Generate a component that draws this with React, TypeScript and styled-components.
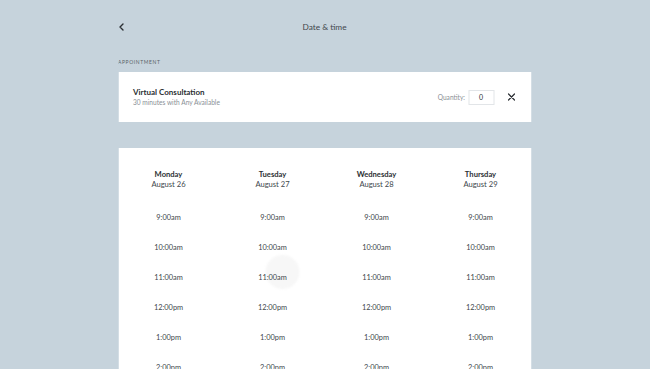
import React from 'react';
import styled, { createGlobalStyle } from 'styled-components';

const GlobalStyle = createGlobalStyle`
  html, body {
    margin: 0;
    padding: 0;
    background: #c6d3dc;
  }
  body {
    font-family: Lato, "Open Sans", sans-serif;
    color: #2b2f33;
    -webkit-font-smoothing: antialiased;
  }
`;

const Page = styled.div`
  width: 413px;
  margin: 0 auto;
  padding-top: 18px;
  height: 369px;
  overflow: hidden;
  box-sizing: border-box;
  transform: translateX(-0.5px);
`;

const Header = styled.div`
  position: relative;
  display: flex;
  align-items: center;
  justify-content: center;
  height: 18px;
`;

const BackButton = styled.button`
  position: absolute;
  left: -3px;
  top: 3px;
  border: 0;
  background: none;
  padding: 0;
  width: 12px;
  height: 12px;
  display: flex;
  align-items: center;
  justify-content: center;
  color: #2b2f33;
`;

const Title = styled.h1`
  margin: 0;
  font-size: 8.3px;
  font-weight: 400;
  color: #41474c;
`;

const SectionLabel = styled.div`
  margin-top: 23px;
  font-size: 5px;
  letter-spacing: 0.6px;
  text-transform: uppercase;
  color: #5b6368;
  line-height: 7px;
`;

const Card = styled.div`
  background: #fff;
  box-sizing: border-box;
`;

const ServiceCard = styled(Card)`
  margin-top: 6px;
  height: 50px;
  display: flex;
  align-items: center;
  padding: 0 15px;
`;

const ServiceInfo = styled.div`
  flex: 1;
`;

const ServiceName = styled.div`
  font-size: 8px;
  font-weight: 700;
  color: #2b2f33;
  line-height: 10px;
`;

const ServiceMeta = styled.div`
  font-size: 6.6px;
  color: #8a9096;
  line-height: 10px;
`;

const QtyLabel = styled.span`
  font-size: 6.6px;
  color: #8a9096;
  margin-right: 3px;
`;

const QtyInput = styled.div`
  width: 26px;
  height: 15px;
  box-sizing: border-box;
  border: 1px solid #e2e5e8;
  font-size: 7px;
  display: flex;
  align-items: center;
  justify-content: center;
  color: #2b2f33;
`;

const CloseButton = styled.button`
  border: 0;
  background: none;
  padding: 0;
  margin-left: 12px;
  width: 10px;
  height: 10px;
  display: flex;
  align-items: center;
  justify-content: center;
  color: #2b2f33;
`;

const ScheduleCard = styled(Card)`
  margin-top: 26px;
  padding-top: 21px;
  position: relative;
  height: 260px;
`;

const Grid = styled.div`
  position: relative;
  z-index: 1;
  display: grid;
  grid-template-columns: repeat(4, 104px);
  justify-content: center;
  margin: 0 -2px;
`;

const Column = styled.div`
  display: flex;
  flex-direction: column;
  align-items: center;
`;

const DayName = styled.div`
  font-size: 7.6px;
  font-weight: 700;
  line-height: 10px;
  color: #2b2f33;
`;

const DayDate = styled.div`
  font-size: 7.6px;
  line-height: 10px;
  color: #41474c;
  margin-bottom: 14px;
`;

const Slot = styled.div`
  height: 30px;
  line-height: 30px;
  font-size: 7.4px;
  color: #41474c;
`;

const Ripple = styled.div`
  position: absolute;
  left: 147px;
  top: 107px;
  width: 34px;
  height: 34px;
  border-radius: 50%;
  background: #f7f7f7;
  filter: blur(1px);
`;

const days = [
  { name: 'Monday', date: 'August 26' },
  { name: 'Tuesday', date: 'August 27' },
  { name: 'Wednesday', date: 'August 28' },
  { name: 'Thursday', date: 'August 29' },
];

const times = ['9:00am', '10:00am', '11:00am', '12:00pm', '1:00pm', '2:00pm'];

export default function App() {
  return (
    <>
      <GlobalStyle />
      <Page>
        <Header>
          <BackButton aria-label="Back">
            <svg width="8" height="8" viewBox="0 0 8 8" fill="none">
              <path d="M5.5 1L2.5 4L5.5 7" stroke="currentColor" strokeWidth="1.4" strokeLinecap="round" strokeLinejoin="round" />
            </svg>
          </BackButton>
          <Title>Date &amp; time</Title>
        </Header>
        <SectionLabel>Appointment</SectionLabel>
        <ServiceCard>
          <ServiceInfo>
            <ServiceName>Virtual Consultation</ServiceName>
            <ServiceMeta>30 minutes with Any Available</ServiceMeta>
          </ServiceInfo>
          <QtyLabel>Quantity:</QtyLabel>
          <QtyInput>0</QtyInput>
          <CloseButton aria-label="Remove">
            <svg width="8" height="8" viewBox="0 0 8 8" fill="none">
              <path d="M1 1L7 7M7 1L1 7" stroke="currentColor" strokeWidth="1.2" strokeLinecap="round" />
            </svg>
          </CloseButton>
        </ServiceCard>
        <ScheduleCard>
          <Ripple />
          <Grid>
            {days.map(d => (
              <Column key={d.name}>
                <DayName>{d.name}</DayName>
                <DayDate>{d.date}</DayDate>
                {times.map(t => (
                  <Slot key={t}>{t}</Slot>
                ))}
              </Column>
            ))}
          </Grid>
        </ScheduleCard>
      </Page>
    </>
  );
}
